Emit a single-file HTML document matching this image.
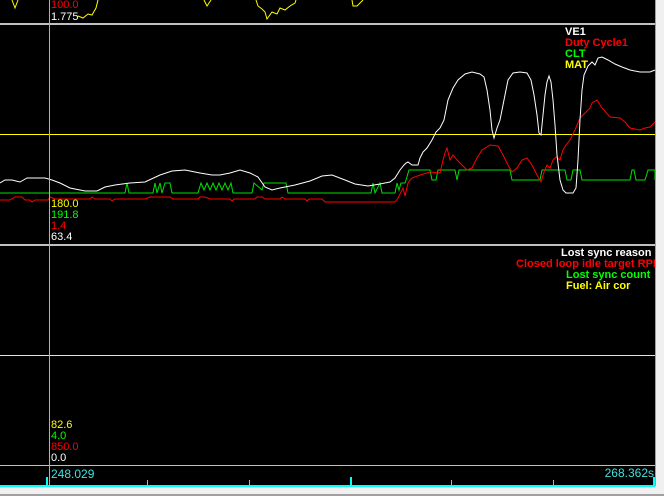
<!DOCTYPE html>
<html><head><meta charset="utf-8"><style>
html,body{margin:0;padding:0;background:#f0f0f0;width:664px;height:496px;overflow:hidden}
svg{display:block}
text{font-family:"Liberation Sans",sans-serif;font-size:11px}
.b{font-weight:bold}
</style></head><body>
<svg width="664" height="496" viewBox="0 0 664 496">
<rect x="0" y="0" width="664" height="496" fill="#f0f0f0"/>
<rect x="0" y="0" width="655" height="486" fill="#000"/>
<rect x="655" y="0" width="1" height="486" fill="#a0a0a0"/>
<rect x="0" y="494" width="664" height="2" fill="#a0a0a0"/>
<!-- separators -->
<rect x="0" y="23" width="655" height="2" fill="#c0c0c0"/>
<rect x="0" y="244" width="655" height="2" fill="#c0c0c0"/>
<rect x="0" y="465" width="655" height="1" fill="#c0c0c0"/>
<!-- yellow ref lines -->
<line x1="0" y1="134.5" x2="655" y2="134.5" stroke="#ffff00" stroke-width="1"/>
<line x1="0" y1="355.5" x2="655" y2="355.5" stroke="#ffff00" stroke-width="1"/>
<!-- top panel yellow trace -->
<g fill="none" stroke="#ffff00" stroke-width="1">
<polyline points="12,0 15,8 18,0"/>
<polyline points="78,16 83,18 88,14 92,15 96,8 98,0"/>
<polyline points="162,0"/>
<polyline points="204,0 207,6 211,0"/>
<polyline points="256,0 258,6 262,9 265,12 267,19 272,12 277,14 280,8 285,10 290,6 295,3 296,0"/>
<polyline points="352,0 353,6 357,6 361,2 363,0"/>
</g>
<!-- green -->
<polyline fill="none" stroke="#00e000" stroke-width="1" points="0,193 125,193 127,183 129,193 153,193 155,183 157,193 160,183 162,193 165,183 170,183 172,193 198,193 201,183 204,190 207,183 210,190 213,183 216,190 219,183 222,190 225,183 228,190 231,183 233,193 252,193 254,183 262,190 264,183 286,183 288,193 371,193 373,183 375,193 380,183 382,193 395,193 397,183 399,190 401,183 405,183 406,180 409,170 430,170 432,180 436,180 438,170 455,170 457,180 459,170 510,170 512,180 540,180 542,170 565,170 567,180 571,180 573,170 580,170 582,180 630,180 632,170 634,170 636,180 645,180 648,170 655,170 655,180"/>
<!-- red -->
<polyline fill="none" stroke="#ff0000" stroke-width="1" points="0,200 10,200 15,197 22,197 25,200 30,200 32,202 35,200 48,200 50,197 55,199 90,199 92,197 95,199 110,199 112,201 115,199 145,199 150,197 170,197 173,199 198,199 200,197 205,197 210,199 230,199 232,201 234,199 255,199 257,197 262,197 265,199 280,199 282,197 285,199 305,199 307,201 309,199 322,199 325,202 395,202 398,198 400,194 403,188 405,196 408,183 410,180 412,178 420,175 430,172 440,173 443,160 445,153 447,148 450,160 453,155 457,160 462,165 467,170 472,168 477,158 482,150 490,145 498,146 503,155 508,165 512,172 517,168 522,160 527,158 532,165 537,175 541,182 544,172 547,165 550,168 553,160 556,157 560,160 563,150 566,145 570,140 575,130 580,118 585,113 590,108 592,103 597,100 602,108 610,117 620,118 625,122 630,128 640,130 645,128 650,127 655,122"/>
<!-- white -->
<polyline fill="none" stroke="#ffffff" stroke-width="1" points="0,183 5,180 12,180 20,182 27,178 45,178 52,180 60,183 70,188 85,191 97,191 105,187 115,185 130,183 145,182 160,175 172,171 185,170 200,173 212,175 220,175 230,173 240,170 250,173 258,177 265,187 272,190 280,188 295,185 310,181 322,176 332,175 345,180 355,184 368,186 380,184 390,182 395,178 400,170 404,165 406,163 408,162 412,165 418,165 420,158 423,152 427,148 432,140 436,132 440,128 444,120 448,100 453,88 458,80 465,74 472,72 480,74 484,77 487,90 490,110 492,130 494,138 497,128 500,120 504,100 508,80 513,73 520,72 527,73 531,80 534,95 537,115 539,133 541,135 543,115 545,95 547,82 549,76 551,82 553,100 555,125 557,155 560,180 563,190 566,193 573,193 576,188 578,160 580,120 582,90 584,75 588,66 592,62 595,65 598,58 602,57 608,60 615,64 622,67 630,70 640,72 650,72 655,70"/>
<!-- cursor -->
<rect x="49" y="0" width="1" height="486" fill="#40e0e0"/>
<!-- top labels -->
<text x="51" y="8" fill="#ff0000">100.0</text>
<text x="51" y="20" fill="#ffffff">1.775</text>
<!-- middle panel labels -->
<text class="b" x="565" y="35" fill="#ffffff">VE1</text>
<text class="b" x="565" y="46" fill="#ff0000">Duty Cycle1</text>
<text class="b" x="565" y="57" fill="#00ff00">CLT</text>
<text class="b" x="565" y="68" fill="#ffff00">MAT</text>
<text x="51" y="207" fill="#ffff00">180.0</text>
<text x="51" y="218" fill="#00ff00">191.8</text>
<text x="51" y="229" fill="#ff0000">1.4</text>
<text x="51" y="240" fill="#ffffff">63.4</text>
<!-- bottom panel labels -->
<svg x="0" y="0" width="655" height="496">
<text class="b" x="561" y="256" fill="#ffffff">Lost sync reason</text>
<text class="b" x="516" y="267" fill="#ff0000">Closed loop idle target RPM</text>
<text class="b" x="566" y="278" fill="#00ff00">Lost sync count</text>
<text class="b" x="566" y="289" fill="#ffff00">Fuel: Air cor</text>
</svg>
<text x="51" y="428" fill="#ffff00">82.6</text>
<text x="51" y="439" fill="#00ff00">4.0</text>
<text x="51" y="450" fill="#ff0000">850.0</text>
<text x="51" y="461" fill="#ffffff">0.0</text>
<!-- axis -->
<text x="51" y="478" fill="#40e0e0" font-size="12" style="font-size:12px">248.029</text>
<text x="654" y="477" fill="#40e0e0" text-anchor="end" style="font-size:12px">268.362s</text>
<rect x="0" y="485" width="655" height="2" fill="#00ffff"/>
<rect x="46" y="477" width="2" height="9" fill="#00ffff"/>
<rect x="147" y="480" width="1" height="6" fill="#00ffff"/>
<rect x="249" y="480" width="1" height="6" fill="#00ffff"/>
<rect x="350" y="477" width="2" height="9" fill="#00ffff"/>
<rect x="451" y="480" width="1" height="6" fill="#00ffff"/>
<rect x="553" y="480" width="1" height="6" fill="#00ffff"/>
<rect x="653" y="477" width="2" height="9" fill="#00ffff"/>
</svg>
</body></html>
